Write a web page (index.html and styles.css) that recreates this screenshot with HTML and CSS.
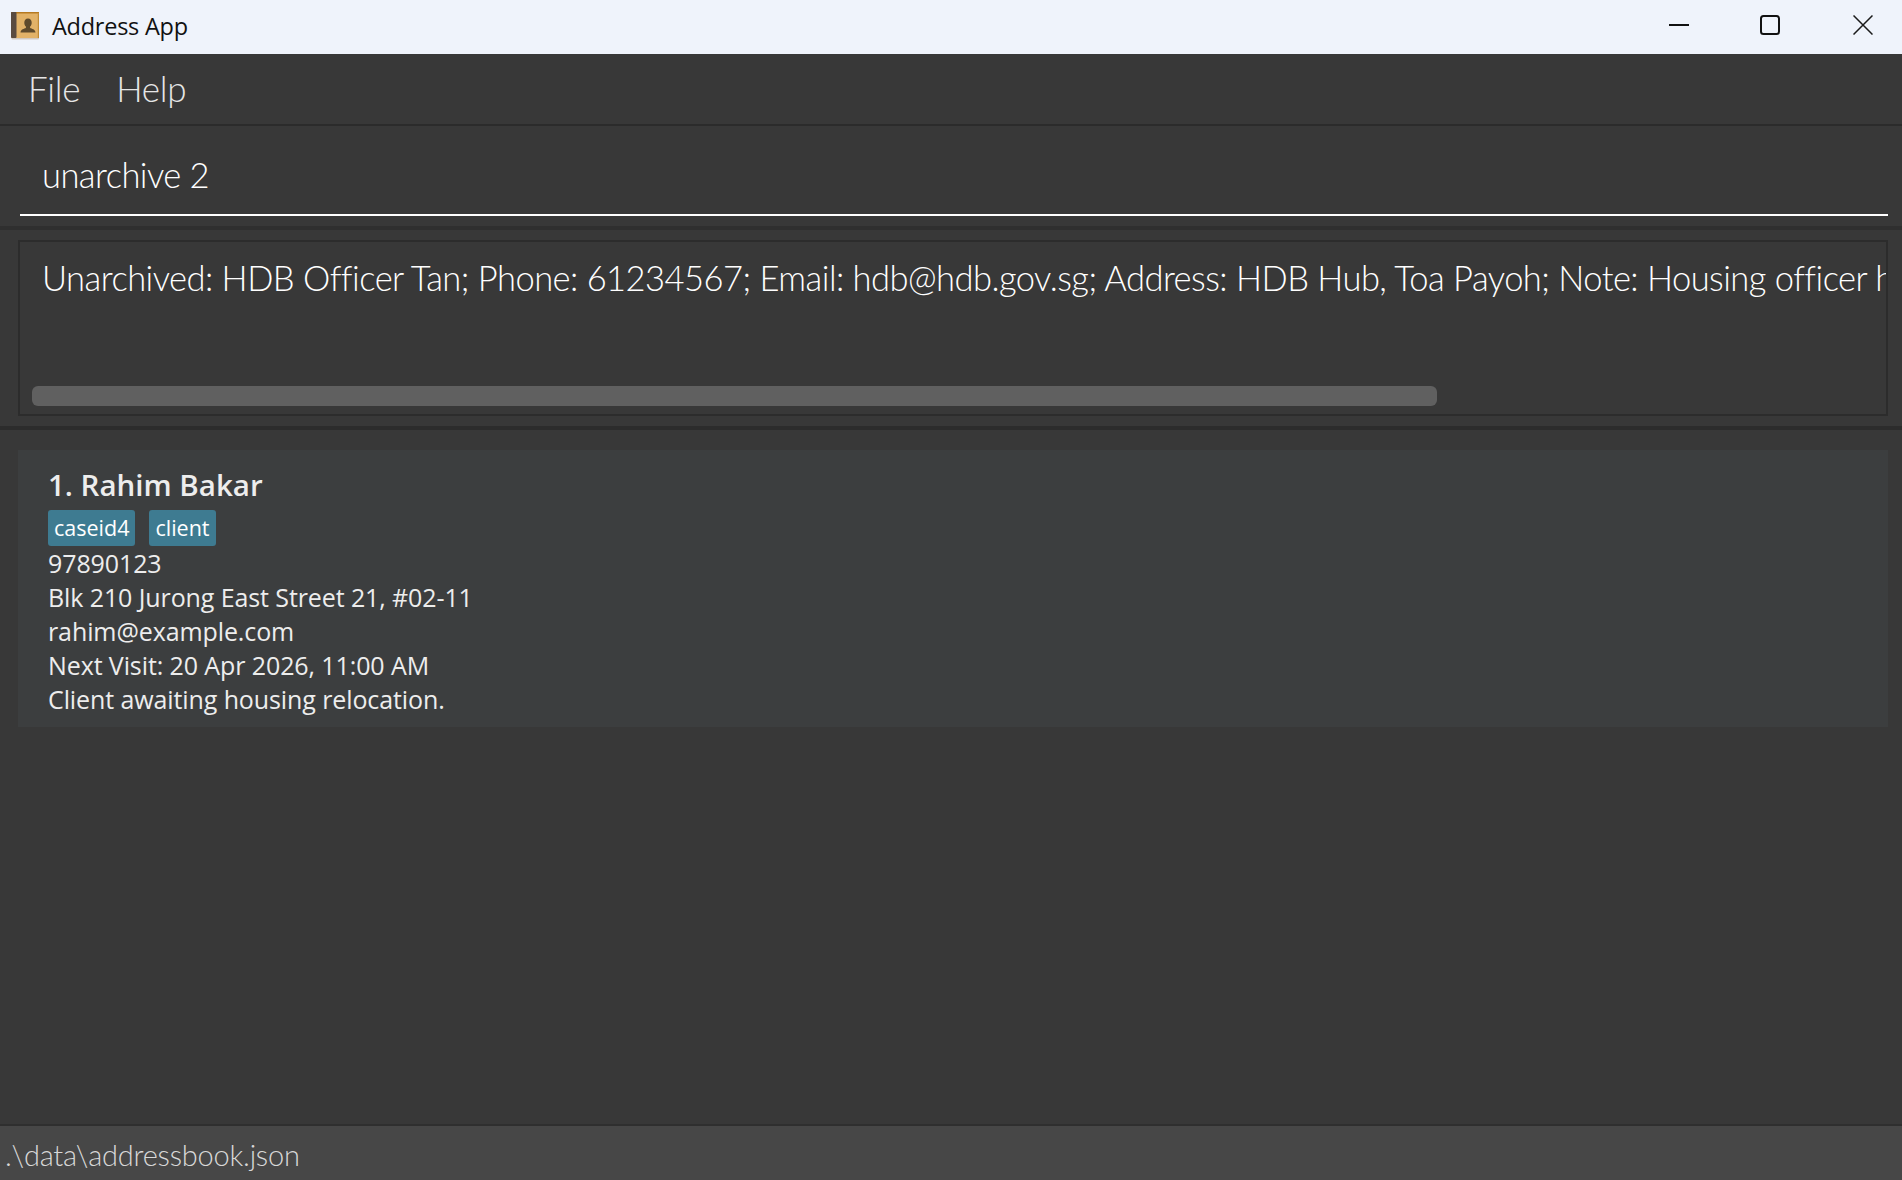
FILE: index.html
```html
<!DOCTYPE html>
<html lang="en">
<head>
<meta charset="utf-8">
<title>Address App</title>
<link rel="stylesheet" href="styles.css">
</head>
<body>
<div class="app">
  <header class="titlebar">
    <svg class="app-icon" width="28" height="28" viewBox="0 0 28 28" aria-hidden="true">
      <rect x="0.5" y="1.5" width="27.5" height="26" rx="1" fill="#8a6a3a" opacity="0.3"/>
      <rect x="0" y="0" width="28" height="26" rx="1" fill="#e2b268"/>
      <rect x="0" y="0" width="28" height="1.500" fill="#b67a22"/>
      <rect x="0" y="0" width="5.500" height="26" rx="1" fill="#5a4b40"/>
      <rect x="26.800" y="1.500" width="1.200" height="24.500" fill="#c08a35"/>
      <path d="M17 6.500c-2.400 0-3.700 1.900-3.700 4.200 0 1.700.7 3.100 1.600 3.900v1.500c-1.800.8-5 1.300-5.400 4.400h15c-.4-3.100-3.600-3.600-5.400-4.400v-1.500c.9-.8 1.600-2.200 1.600-3.900 0-2.300-1.300-4.200-3.700-4.200z" fill="#5e4a2c"/>
    </svg>
    <span class="app-title">Address App</span>
    <div class="window-controls">
      <svg class="win-btn" width="20" height="20" viewBox="0 0 20 20" aria-hidden="true"><path d="M0 10h20" stroke="#111" stroke-width="2" fill="none"/></svg>
      <svg class="win-btn" width="20" height="20" viewBox="0 0 20 20" aria-hidden="true"><rect x="1" y="1" width="18" height="18" rx="2.500" stroke="#111" stroke-width="2" fill="none"/></svg>
      <svg class="win-btn win-close" width="20" height="20" viewBox="0 0 20 20" aria-hidden="true"><path d="M0.500 0.500l19 19M19.500 0.500l-19 19" stroke="#1a1a1a" stroke-width="1.500" fill="none"/></svg>
    </div>
  </header>

  <nav class="menubar">
    <span class="menu-item">File</span>
    <span class="menu-item">Help</span>
  </nav>

  <section class="command-pane">
    <div class="command-box">unarchive 2</div>
  </section>

  <section class="result-pane">
    <div class="result-box">
      <div class="result-text">Unarchived: HDB Officer Tan; Phone: 61234567; Email: hdb@hdb.gov.sg; Address: HDB Hub, Toa Payoh; Note: Housing officer handling relocation</div>
      <div class="scroll-thumb"></div>
    </div>
  </section>

  <main class="list-pane">
    <article class="card">
      <h2 class="card-name">1. Rahim Bakar</h2>
      <div class="tags">
        <span class="tag">caseid4</span>
        <span class="tag">client</span>
      </div>
      <div class="card-line">97890123</div>
      <div class="card-line">Blk 210 Jurong East Street 21, #02-11</div>
      <div class="card-line">rahim@example.com</div>
      <div class="card-line">Next Visit: 20 Apr 2026, 11:00 AM</div>
      <div class="card-line">Client awaiting housing relocation.</div>
    </article>
  </main>

  <footer class="statusbar">.\data\addressbook.json</footer>
</div>
</body>
</html>
```
FILE: styles.css
```css
* { box-sizing: border-box; }
html, body { margin: 0; padding: 0; height: 100%; overflow: hidden; }
body { font-family: "Open Sans", "Liberation Sans", sans-serif; background: #383838; }

.app { display: flex; flex-direction: column; height: 1180px; width: 1902px; }

.titlebar {
  height: 54px; flex: none; display: flex; align-items: center;
  background: #eff3fb; color: #111; padding-left: 11px;
}
.app-icon { flex: none; margin-top: -2px; }
.app-title { margin-left: 13px; font-size: 23.500px; font-weight: 400; letter-spacing: -0.25px; margin-top: -2px; }
.window-controls { margin-left: auto; display: flex; align-items: center; padding-right: 29px; gap: 71px; margin-top: -4px; }
.win-btn { display: block; flex: none; }
.win-close { margin-left: 2px; }

.menubar {
  height: 72px; flex: none; display: flex; align-items: center; gap: 36px;
  padding: 0 0 2px 28px; background: #383838; border-bottom: 2px solid #2b2b2b;
  color: #e6e6e6; font-family: "Lato", sans-serif; font-size: 35px; font-weight: 300; letter-spacing: -0.3px;
}

.command-pane {
  height: 104px; flex: none; padding: 0 14px 0 20px;
  background: #383838; border-bottom: 4px solid #2f2f2f;
}
.command-box {
  height: 90px; padding: 24px 0 0 22px;
  border-bottom: 2px solid #fff; color: #fff;
  font-family: "Lato", sans-serif; font-size: 34.500px; font-weight: 300; line-height: 50px; letter-spacing: -0.55px;
}

.result-pane {
  height: 200px; flex: none; padding: 10px 14px 10px 18px;
  background: #383838; border-bottom: 4px solid #2c2c2c;
}
.result-box {
  height: 176px; border: 2px solid #2c2c2c; padding: 0 0 0 12px; overflow: hidden;
}
.result-text {
  height: 144px; padding: 11px 8px 0 10px; color: #fff; white-space: nowrap; overflow: hidden;
  font-family: "Lato", sans-serif; font-size: 34.500px; font-weight: 300; line-height: 50px; letter-spacing: -0.53px;
}
.scroll-thumb { width: 1405px; height: 20px; background: #606060; border-radius: 6px; }

.list-pane { flex: 1; padding: 20px 14px 0 18px; background: #383838; }
.card { height: 277px; background: #3c3e3f; padding: 15px 0 0 30px; color: #ededed; }
.card-name { margin: 0; font-size: 29.500px; font-weight: 600; line-height: 40px; color: #ededed; }
.tags { display: flex; gap: 14px; margin-top: 5px; }
.tag {
  height: 36px; padding: 0 6px; background: #3e7b91; border-radius: 3px; color: #fff;
  font-size: 21.500px; font-weight: 500; line-height: 36px;
}
.card-line { font-size: 25px; line-height: 34px; font-weight: 400; letter-spacing: -0.1px; }

.statusbar {
  height: 56px; flex: none; background: #474747; border-top: 2px solid #2f2f2f;
  padding: 7px 0 0 5px; color: #d8d8d8; font-family: "Lato", sans-serif; font-size: 29px; font-weight: 300; line-height: 44px; letter-spacing: -0.22px;
}
```
